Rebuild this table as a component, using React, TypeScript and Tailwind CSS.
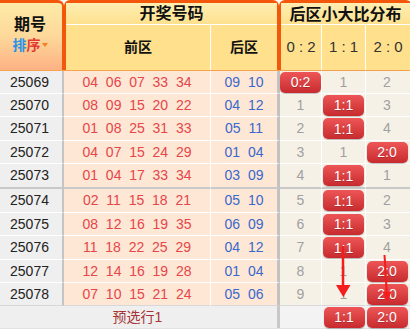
import React from "react";

type Cell = string | { badge: string };

const rows: { p: string; f: string[]; b: string[]; d: Cell[] }[] = [
  { p: "25069", f: ["04", "06", "07", "33", "34"], b: ["09", "10"], d: [{ badge: "0:2" }, "1", "2"] },
  { p: "25070", f: ["08", "09", "15", "20", "22"], b: ["04", "12"], d: ["1", { badge: "1:1" }, "3"] },
  { p: "25071", f: ["01", "08", "25", "31", "33"], b: ["05", "11"], d: ["2", { badge: "1:1" }, "4"] },
  { p: "25072", f: ["04", "07", "15", "24", "29"], b: ["01", "04"], d: ["3", "1", { badge: "2:0" }] },
  { p: "25073", f: ["01", "04", "17", "33", "34"], b: ["03", "09"], d: ["4", { badge: "1:1" }, "1"] },
  { p: "25074", f: ["02", "11", "15", "18", "21"], b: ["05", "10"], d: ["5", { badge: "1:1" }, "2"] },
  { p: "25075", f: ["08", "12", "16", "19", "35"], b: ["06", "09"], d: ["6", { badge: "1:1" }, "3"] },
  { p: "25076", f: ["11", "18", "22", "25", "29"], b: ["04", "12"], d: ["7", { badge: "1:1" }, "4"] },
  { p: "25077", f: ["12", "14", "16", "19", "28"], b: ["01", "04"], d: ["8", "1", { badge: "2:0" }] },
  { p: "25078", f: ["07", "10", "15", "21", "24"], b: ["05", "06"], d: ["9", "1", { badge: "2:0" }] },
];

// row heights incl. bottom border
const heights = [
  "h-[23px]", "h-[23px]", "h-[24px]", "h-[23px]", "h-[25px]",
  "h-[24px]", "h-[23px]", "h-[24px]", "h-[23px]", "h-[23px]",
];

function Badge({ text }: { text: string }) {
  return (
    <div className="w-[41px] h-[21px] rounded-[5px] bg-linear-to-b from-[#ee5557] to-[#c72a2e] shadow-[0_1px_1px_rgba(0,0,0,0.25)] flex items-center justify-center text-white text-[14px] leading-none [text-shadow:0_1px_0_rgba(0,0,0,0.2)]">
      {text}
    </div>
  );
}

function DistCell({ c }: { c: Cell }) {
  if (typeof c === "string") return <span className="text-[#a0a0a0] text-[14px]">{c}</span>;
  return <Badge text={c.badge} />;
}

export default function App() {
  return (
    <div className="relative w-[410px] h-[332px] overflow-hidden bg-white font-['Liberation_Sans','Noto_Sans_CJK_SC',sans-serif]">
      {/* header */}
      <div className="flex h-[70px]">
        <div className="w-[64px] shrink-0 border-t-[3px] border-r-2 border-[#f3570c] rounded-tr-[6px] bg-linear-to-b from-[#fdeba8] via-[#fdd89a] to-[#fdb184] flex flex-col items-center justify-center pr-[2px] pb-[4px]">
          <div className="text-[16px] font-bold text-[#111] leading-none">期号</div>
          <div className="mt-[5px] text-[14px] font-bold leading-none flex items-center">
            <span className="text-[#2a93e6]">排</span>
            <span className="text-[#e23b36]">序</span>
            <span className="ml-[1px] w-0 h-0 border-l-[3px] border-r-[3px] border-t-[4px] border-l-transparent border-r-transparent border-t-[#f5801e]" />
          </div>
        </div>
        <div className="w-[215px] shrink-0 border-t-[3px] border-x-2 border-[#f3570c] rounded-t-[6px] flex flex-col">
          <div className="h-[22px] border-b border-white bg-linear-to-b from-[#feeeb2] to-[#fee18e] flex items-center justify-center text-[16px] font-bold text-[#111]">
            开奖号码
          </div>
          <div className="flex-1 flex bg-[#fee08d] text-[14px] font-bold text-[#111]">
            <div className="w-[145px] border-r border-white flex items-center justify-center">前区</div>
            <div className="flex-1 flex items-center justify-center">后区</div>
          </div>
        </div>
        <div className="w-[133px] shrink-0 border-t-[3px] border-x-2 border-[#f3570c] rounded-t-[6px] flex flex-col">
          <div className="h-[22px] border-b border-white bg-linear-to-b from-[#feeeb2] to-[#fee18e] flex items-center justify-center text-[16px] font-bold text-[#111] pt-[2px]">
            后区小大比分布
          </div>
          <div className="flex-1 flex bg-[#fee08d] text-[15px] text-[#333] whitespace-pre">
            <div className="w-[41px] border-r border-white flex items-center justify-center">0 : 2</div>
            <div className="w-[44px] border-r border-white flex items-center justify-center">1 : 1</div>
            <div className="w-[44px] flex items-center justify-center">2 : 0</div>
          </div>
        </div>
      </div>
      <div className="h-[1px] bg-[#f6a24e]" />

      {/* body */}
      {rows.map((r, i) => {
        const bb =
          i === 4
            ? "border-b-2 border-b-[#c9c9c9]"
            : i === 9
            ? "border-b border-b-[#d8d8d8]"
            : "border-b border-b-white";
        return (
          <div key={r.p} className={`grid grid-cols-[64px_147px_69px_42px_44px_44px] ${heights[i]}`}>
            <div className={`${bb} bg-[#efefef] border-r-2 border-r-[#c4c4c4] flex items-center justify-center pr-[3px] text-[14px] text-[#222]`}>
              {r.p}
            </div>
            <div className={`${bb} bg-[#fee7d4] border-r border-r-white flex items-center justify-center text-[14px] text-[#e6454a] whitespace-pre`}>
              {r.f.join("  ")}
            </div>
            <div className={`${bb} bg-[#fee7d4] border-r-[3px] border-r-[#c2c2c2] flex items-center justify-center text-[14px] text-[#3a68cc] whitespace-pre`}>
              {r.b.join("  ")}
            </div>
            <div className={`${bb} bg-[#f6f1e6] border-r border-r-white flex items-center justify-center`}>
              <DistCell c={r.d[0]} />
            </div>
            <div className={`${bb} bg-[#f6f1e6] border-r border-r-white flex items-center justify-center`}>
              <DistCell c={r.d[1]} />
            </div>
            <div className={`${bb} bg-[#f6f1e6] flex items-center justify-center pr-[2px]`}>
              <DistCell c={r.d[2]} />
            </div>
          </div>
        );
      })}

      {/* footer */}
      <div className="grid grid-cols-[64px_147px_69px_42px_44px_44px] h-[23px] border-b border-b-[#e2e2e2]">
        <div className="bg-[#efefef]" />
        <div className="bg-[#efefef] flex items-center justify-center text-[14px] text-[#a63434]">预选行1</div>
        <div className="bg-[#efefef] border-r-[3px] border-r-[#c8c8c8]" />
        <div className="bg-[#f3f3f3]" />
        <div className="bg-[#f3f3f3] flex items-center justify-center">
          <Badge text="1:1" />
        </div>
        <div className="bg-[#f3f3f3] flex items-center justify-center pr-[2px]">
          <Badge text="2:0" />
        </div>
      </div>

      {/* trend arrows */}
      <svg className="absolute left-0 top-0 pointer-events-none" width="410" height="332" viewBox="0 0 410 332">
        <line x1="343" y1="246" x2="343" y2="287" stroke="#f41c1c" strokeWidth="2.5" />
        <polygon points="336,285 350.5,285 343.3,297" fill="#f41c1c" />
        <line x1="384.5" y1="255" x2="386.8" y2="293" stroke="#f41c1c" strokeWidth="2" />
        <polygon points="382.5,291.5 391.5,291.5 387.3,302" fill="#f41c1c" />
      </svg>
    </div>
  );
}
